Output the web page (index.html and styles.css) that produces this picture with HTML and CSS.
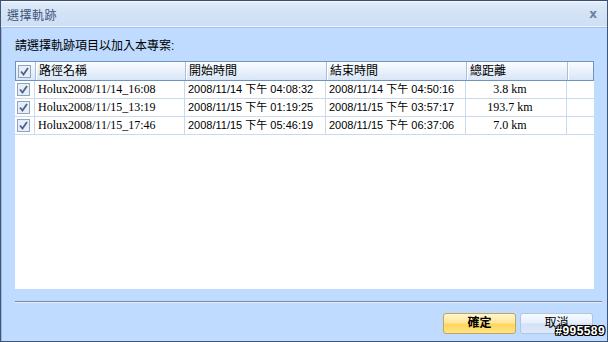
FILE: index.html
```html
<!DOCTYPE html>
<html>
<head>
<meta charset="utf-8">
<link rel="stylesheet" href="styles.css">
</head>
<body>
<div class="window">
  <div class="titlebar">
    <span class="title">選擇軌跡</span>
    <span class="close">x</span>
  </div>
  <div class="content">
    <div class="label">請選擇軌跡項目以加入本專案:</div>
    <div class="grid">
      <div class="row head">
        <div class="cell cb"><svg width="13" height="13" viewBox="0 0 13 13"><rect x="0.5" y="0.5" width="12" height="12" fill="#e8eef6" stroke="#8ea4c2"/><path d="M3 6.5 L5.5 9.5 L10 3" fill="none" stroke="#4a6391" stroke-width="1.8"/></svg></div>
        <div class="cell">路徑名稱</div>
        <div class="cell">開始時間</div>
        <div class="cell">結束時間</div>
        <div class="cell">總距離</div>
        <div class="cell last"></div>
      </div>
      <div class="row">
        <div class="cell cb"><svg width="13" height="13" viewBox="0 0 13 13"><rect x="0.5" y="0.5" width="12" height="12" fill="#e8eef6" stroke="#8ea4c2"/><path d="M3 6.5 L5.5 9.5 L10 3" fill="none" stroke="#4a6391" stroke-width="1.8"/></svg></div>
        <div class="cell serif">Holux2008/11/14_16:08</div>
        <div class="cell">2008/11/14 下午 04:08:32</div>
        <div class="cell">2008/11/14 下午 04:50:16</div>
        <div class="cell serif num">3.8 km</div>
        <div class="cell last"></div>
      </div>
      <div class="row">
        <div class="cell cb"><svg width="13" height="13" viewBox="0 0 13 13"><rect x="0.5" y="0.5" width="12" height="12" fill="#e8eef6" stroke="#8ea4c2"/><path d="M3 6.5 L5.5 9.5 L10 3" fill="none" stroke="#4a6391" stroke-width="1.8"/></svg></div>
        <div class="cell serif">Holux2008/11/15_13:19</div>
        <div class="cell">2008/11/15 下午 01:19:25</div>
        <div class="cell">2008/11/15 下午 03:57:17</div>
        <div class="cell serif num">193.7 km</div>
        <div class="cell last"></div>
      </div>
      <div class="row">
        <div class="cell cb"><svg width="13" height="13" viewBox="0 0 13 13"><rect x="0.5" y="0.5" width="12" height="12" fill="#e8eef6" stroke="#8ea4c2"/><path d="M3 6.5 L5.5 9.5 L10 3" fill="none" stroke="#4a6391" stroke-width="1.8"/></svg></div>
        <div class="cell serif">Holux2008/11/15_17:46</div>
        <div class="cell">2008/11/15 下午 05:46:19</div>
        <div class="cell">2008/11/15 下午 06:37:06</div>
        <div class="cell serif num">7.0 km</div>
        <div class="cell last"></div>
      </div>
    </div>
    <div class="sep"></div>
    <div class="buttons">
      <div class="btn ok">確定</div>
      <div class="btn cancel">取消</div>
    </div>
  </div>
  <div class="watermark">#995589</div>
</div>
</body>
</html>
```
FILE: styles.css
```css
html, body {
  margin: 0;
  padding: 0;
  background: #bfdbff;
}
body {
  font-family: "Liberation Sans", "Noto Sans CJK TC", sans-serif;
  font-size: 12px;
  color: #000;
}
.window {
  position: relative;
  width: 608px;
  height: 342px;
  box-sizing: border-box;
  border: 1px solid #3f5678;
  border-top-color: #3a4f6e;
  background: #bfdbff;
  display: flex;
  flex-direction: column;
  overflow: hidden;
}
.titlebar {
  height: 27px;
  box-sizing: border-box;
  display: flex;
  align-items: center;
  justify-content: space-between;
  padding: 0 8px 1px 6px;
  background: linear-gradient(#e4eefb 0px, #dce8f8 3px, #d3e2f6 12px, #cfdff4 26px);
  border-top: 1px solid #f3f8ff;
  border-bottom: 1px solid #a8c3e6;
  box-shadow: inset 0 -1px 0 #e9f2ff;
}
.title {
  font-size: 12px;
  color: #3e5679;
  letter-spacing: 0.5px;
}
.close {
  font-family: "DejaVu Sans", sans-serif;
  font-weight: bold;
  font-size: 12px;
  color: #6e819c;
  margin-right: 2px;
}
.content {
  flex: 1;
  display: flex;
  flex-direction: column;
  padding: 0 13px 0 13px;
  border-left: 1px solid #9bb6d9;
}
.label {
  margin-top: 11px;
  height: 15px;
  line-height: 15px;
  font-size: 12px;
}
.grid {
  margin-top: 7px;
  width: 579px;
  height: 228px;
  background: #fff;
  display: flex;
  flex-direction: column;
}
.row {
  display: grid;
  grid-template-columns: 20px 150px 141px 140px 101px 1fr;
  height: 18px;
  border-bottom: 1px solid #c9daef;
  box-sizing: border-box;
}
.row.head {
  height: 20px;
  border: 1px solid #6f92bf;
  background: linear-gradient(#fbfdff, #e9f1fb 50%, #d9e6f6);
}
.cell {
  border-right: 1px solid #c9daef;
  padding-left: 3px;
  line-height: 17px;
  font-size: 11px;
  white-space: nowrap;
  overflow: hidden;
}
.head .cell {
  font-size: 12px;
  line-height: 18px;
  border-right: 1px solid #a7bfdc;
  box-shadow: 1px 0 0 #ffffff;
}
.head .cell.last {
  border-right: none;
  box-shadow: none;
}
.cell.cb {
  padding-left: 2px;
  display: flex;
  align-items: center;
}
.serif {
  font-family: "Liberation Serif", "Noto Sans CJK TC", serif;
  font-size: 12px;
}
.num {
  text-align: center;
  padding-left: 0;
  padding-right: 12px;
}
.cell.last {
  border-right: none;
}
.sep {
  margin-top: 12px;
  width: 587px;
  height: 1px;
  background: #7d8b9b;
  border-bottom: 1px solid #e3eefc;
}
.buttons {
  margin-top: 10px;
  display: flex;
  justify-content: flex-end;
  gap: 4px;
  padding-right: 1px;
}
.btn {
  width: 73px;
  height: 21px;
  box-sizing: border-box;
  text-align: center;
  line-height: 19px;
  font-size: 12px;
  border-radius: 3px;
}
.btn.ok {
  font-weight: bold;
  border: 1px solid #c4a45d;
  background: linear-gradient(#fff7cf, #ffe79a 45%, #ffd75a 55%, #ffe38a);
}
.btn.cancel {
  border: 1px solid #b3c6e0;
  background: linear-gradient(#f7fbff, #e6effb 45%, #d3e2f6 55%, #dde9f9);
}
.watermark {
  position: absolute;
  right: 2px;
  bottom: 3px;
  font-family: "Liberation Sans", sans-serif;
  font-weight: bold;
  font-size: 12px;
  color: #fff;
  letter-spacing: 0.4px;
  text-shadow: -1px 0 #000, 1px 0 #000, 0 -1px #000, 0 1px #000, -1px -1px #000, 1px 1px #000, 1px -1px #000, -1px 1px #000;
}
```
